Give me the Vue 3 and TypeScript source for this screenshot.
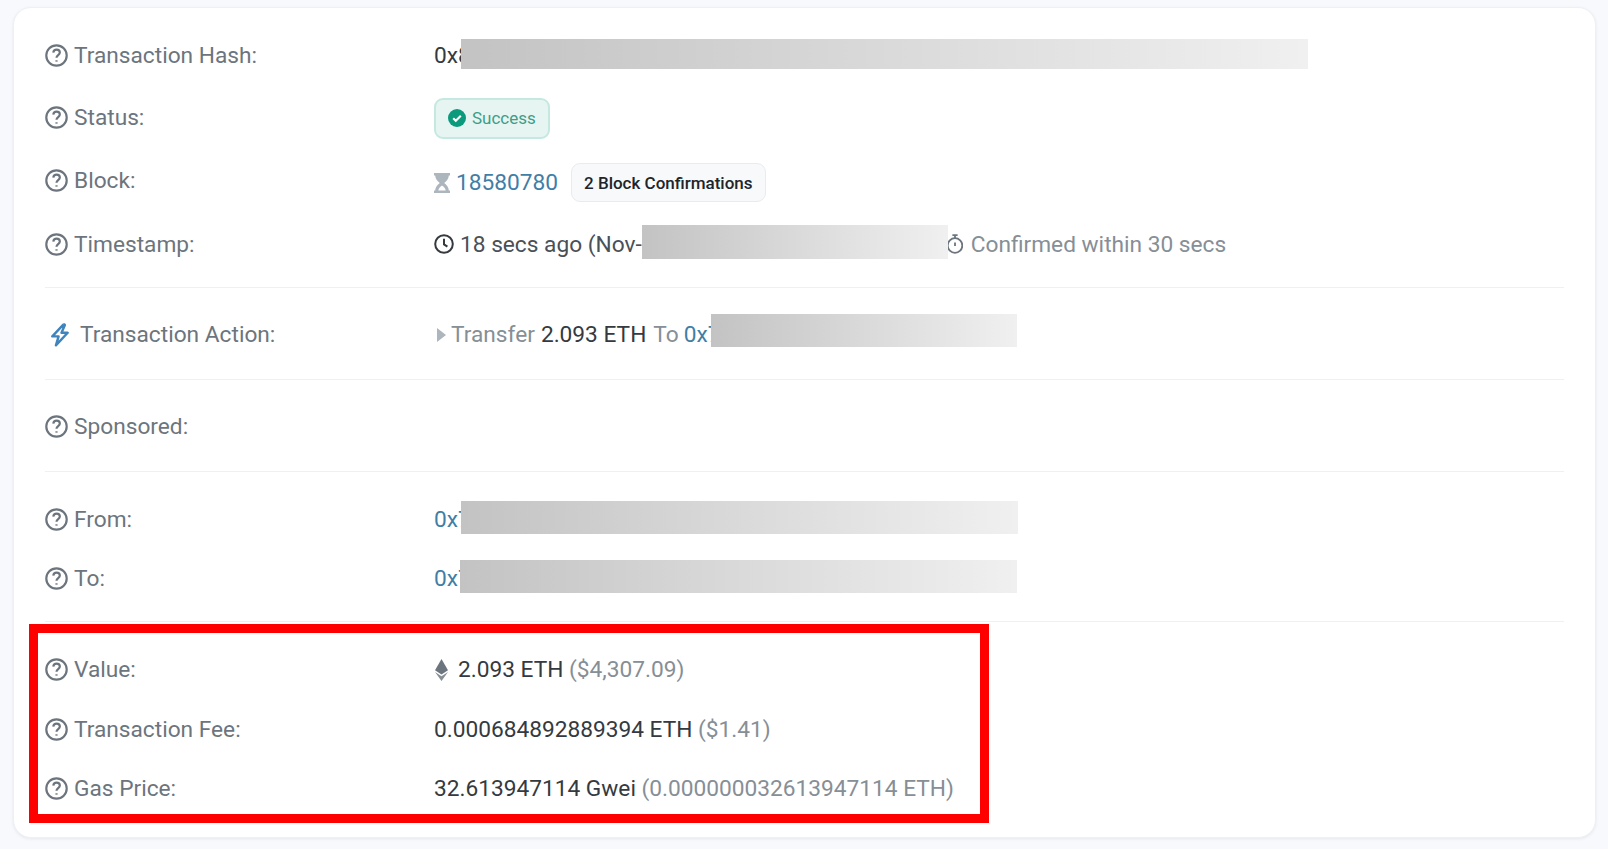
<script setup lang="ts">
const help = 'M12 2.2a9.8 9.8 0 1 0 0 19.6 9.8 9.8 0 0 0 0-19.6Z'
const helpMark = 'M8.9 9.3c.2-1.8 1.5-2.9 3.2-2.9 1.8 0 3.1 1.1 3.1 2.7 0 2.4-3.2 2.6-3.2 5'
</script>

<template>
  <div class="page">
    <div class="card">
      <section class="group first">
        <div class="row">
          <div class="label">
            <svg class="help" viewBox="0 0 24 24"><path :d="help" /><path :d="helpMark" /><path class="dot" d="M12 16.6v1.3" /></svg>
            <span>Transaction Hash:</span>
          </div>
          <div class="value">0x8<span class="redact hash"></span></div>
        </div>
        <div class="row">
          <div class="label">
            <svg class="help" viewBox="0 0 24 24"><path :d="help" /><path :d="helpMark" /><path class="dot" d="M12 16.6v1.3" /></svg>
            <span>Status:</span>
          </div>
          <div class="value">
            <span class="success">
              <svg viewBox="0 0 18 18" width="18" height="18"><circle cx="9" cy="9" r="9" fill="#0b9a7c" /><path d="M5.2 9.2l2.6 2.6 5-5" fill="none" stroke="#fff" stroke-width="2.1" /></svg>
              <span>Success</span>
            </span>
          </div>
        </div>
        <div class="row tall">
          <div class="label">
            <svg class="help" viewBox="0 0 24 24"><path :d="help" /><path :d="helpMark" /><path class="dot" d="M12 16.6v1.3" /></svg>
            <span>Block:</span>
          </div>
          <div class="value block-value">
            <svg class="hourglass" viewBox="0 0 16 20" width="16" height="20">
              <path d="M0 0h16v2.6h-1.2c0 3.2-2.2 5.6-4.6 7.4 2.4 1.8 4.6 4.2 4.6 7.4H16V20H0v-2.6h1.2c0-3.2 2.2-5.6 4.6-7.4C3.400 8.200 1.200 5.800 1.200 2.600H0Z" fill="#adb5bd" />
              <path d="M8 12.400c-1.900 1.400-3.500 3-3.700 5h7.400c-.2-2-1.800-3.600-3.700-5Z" fill="#fff" />
            </svg>
            <a class="link block-no">18580780</a>
            <span class="confirmations">2 Block Confirmations</span>
          </div>
        </div>
        <div class="row tall">
          <div class="label">
            <svg class="help" viewBox="0 0 24 24"><path :d="help" /><path :d="helpMark" /><path class="dot" d="M12 16.6v1.3" /></svg>
            <span>Timestamp:</span>
          </div>
          <div class="value">
            <svg class="clock" viewBox="0 0 20 20" width="20" height="20"><circle cx="10" cy="10" r="8.800" /><path d="M10 4.800V10.400l3.400 2.300" /></svg>
            <span class="stamp">18 secs ago (Nov-</span><span class="redact time"></span>
            <svg class="watch" viewBox="1 0 15 20" width="15" height="20"><circle cx="8" cy="11.500" r="7.300" /><path d="M5.400 1.200h5.200M8 1.200v3.400M8 8.400v3.600" /></svg>
            <span class="muted confirmed">Confirmed within 30 secs</span>
          </div>
        </div>
      </section>

      <section class="group action">
        <div class="row">
          <div class="label">
            <svg class="bolt" viewBox="0 0 20 24" width="20" height="24"><path d="M13.300 1.600 2.300 13.400h6.300l-2.700 9 11.800-12.600h-6.200l3.300-7.600c.2-.7-.9-1.100-1.500-.6Z" /></svg>
            <span>Transaction Action:</span>
          </div>
          <div class="value">
            <svg class="caret" viewBox="0 0 9 14" width="9" height="14"><path d="M0 0l9 7-9 7Z" fill="#adb5bd" /></svg>
            <span class="muted transfer">Transfer</span>
            <span class="amount">2.093 ETH</span>
            <span class="muted to">To</span>
            <a class="link to-addr">0x7</a><span class="redact action-addr"></span>
          </div>
        </div>
      </section>

      <section class="group sponsored">
        <div class="row">
          <div class="label">
            <svg class="help" viewBox="0 0 24 24"><path :d="help" /><path :d="helpMark" /><path class="dot" d="M12 16.6v1.3" /></svg>
            <span>Sponsored:</span>
          </div>
        </div>
      </section>

      <section class="group parties">
        <div class="row short">
          <div class="label">
            <svg class="help" viewBox="0 0 24 24"><path :d="help" /><path :d="helpMark" /><path class="dot" d="M12 16.6v1.3" /></svg>
            <span>From:</span>
          </div>
          <div class="value"><a class="link">0x7</a><span class="redact addr"></span></div>
        </div>
        <div class="row short">
          <div class="label">
            <svg class="help" viewBox="0 0 24 24"><path :d="help" /><path :d="helpMark" /><path class="dot" d="M12 16.6v1.3" /></svg>
            <span>To:</span>
          </div>
          <div class="value"><a class="link">0x7</a><span class="redact addr to-bar"></span></div>
        </div>
      </section>

      <section class="group amounts">
        <div class="highlight"></div>
        <div class="row short">
          <div class="label">
            <svg class="help" viewBox="0 0 24 24"><path :d="help" /><path :d="helpMark" /><path class="dot" d="M12 16.6v1.3" /></svg>
            <span>Value:</span>
          </div>
          <div class="value">
            <svg class="eth" viewBox="0 0 15 22" width="15" height="22">
              <path d="M7.500 0 14 11.200 7.500 15.500 1 11.200Z" fill="#6c757d" />
              <path d="M7.500 17.300 14 13 7.500 22 1 13Z" fill="#868e96" />
            </svg>
            <span class="eth-amount">2.093 ETH</span>&nbsp;<span class="muted">($4,307.09)</span>
          </div>
        </div>
        <div class="row short">
          <div class="label">
            <svg class="help" viewBox="0 0 24 24"><path :d="help" /><path :d="helpMark" /><path class="dot" d="M12 16.6v1.3" /></svg>
            <span>Transaction Fee:</span>
          </div>
          <div class="value">0.000684892889394 ETH&nbsp;<span class="muted">($1.41)</span></div>
        </div>
        <div class="row short">
          <div class="label">
            <svg class="help" viewBox="0 0 24 24"><path :d="help" /><path :d="helpMark" /><path class="dot" d="M12 16.6v1.3" /></svg>
            <span>Gas Price:</span>
          </div>
          <div class="value">32.613947114 Gwei&nbsp;<span class="muted">(0.000000032613947114 ETH)</span></div>
        </div>
      </section>
    </div>
  </div>
</template>

<style>
body {
  background: #f8f9fc;
}
</style>

<style scoped>
.page {
  height: 849px;
  padding: 7px 12px 11px 13px;
  box-sizing: border-box;
  font-family: Roboto, "Liberation Sans", sans-serif;
  font-size: 22.7px;
  color: #343a40;
  overflow: hidden;
}

.card {
  height: 100%;
  box-sizing: border-box;
  padding: 0 31px;
  background: #fff;
  border: 1px solid #eef0f4;
  border-radius: 18px;
  box-shadow: 0 1px 3px rgba(189, 197, 209, 0.3);
}

.group {
  position: relative;
  border-bottom: 1px solid #eff0f2;
}

.group:last-child {
  border-bottom: none;
}

.first {
  padding: 16px 0 11px;
}

.action,
.sponsored {
  padding: 16.5px 0 14.5px;
}

.parties {
  padding: 17.5px 0 12.5px;
}

.amounts {
  padding: 18px 0 0;
}

.row {
  display: grid;
  grid-template-columns: 389px 1fr;
  align-items: center;
  height: 62px;
}

.row.tall {
  height: 64px;
}

.row.short {
  height: 59.5px;
}

.action .row,
.sponsored .row {
  height: 60px;
}

.label {
  display: flex;
  align-items: center;
  color: #6c757d;
}

.help {
  width: 25px;
  height: 25px;
  margin: 0 5px 0 -1px;
  fill: none;
  stroke: #6c757d;
  stroke-width: 2.1;
}

.value {
  display: flex;
  align-items: center;
  white-space: pre;
}

.block-value {
  padding-top: 5px;
}

.link {
  color: #3f7ea6;
}

.muted {
  color: #868e96;
}

.redact {
  display: block;
  flex: none;
  height: 33px;
  background: linear-gradient(90deg, #c3c3c3, #f0f0f0);
}

.redact.hash {
  width: 847px;
  height: 30px;
  margin: 0 0 2px -10px;
}

.redact.time {
  width: 306px;
  height: 34px;
  margin-bottom: 4px;
}

.redact.action-addr {
  width: 306px;
  margin: 0 0 9px -9px;
}

.redact.addr {
  width: 557px;
  margin: 0 0 3px -10px;
}

.redact.to-bar {
  margin: 0 0 4px -11px;
}

.success {
  display: flex;
  align-items: center;
  gap: 6px;
  height: 41px;
  width: 116px;
  margin-top: 2px;
  padding-left: 12px;
  box-sizing: border-box;
  font-size: 17px;
  color: #3f9d87;
  background: #e6f5f2;
  border: 2px solid #c5e8e0;
  border-radius: 9px;
}

.success svg {
  flex: none;
}

.hourglass {
  margin-right: 6px;
}

.block-no {
  margin-right: 13px;
}

.confirmations {
  display: flex;
  align-items: center;
  height: 39px;
  box-sizing: border-box;
  padding: 0 12px;
  font-size: 17px;
  font-weight: 500;
  color: #212529;
  background: #f8f9fa;
  border: 1.500px solid #e9ecef;
  border-radius: 9px;
}

.clock {
  margin-right: 6px;
  fill: none;
  stroke: #343a40;
  stroke-width: 2;
}

.stamp {
  color: #495057;
}

.watch {
  margin-right: 8px;
  fill: none;
  stroke: #6c757d;
  stroke-width: 1.800;
}

.bolt {
  margin: 0 10px 0 5px;
  fill: none;
  stroke: #3f84bd;
  stroke-width: 2.400;
  stroke-linejoin: round;
}

.caret {
  margin: 0 5px 0 3px;
}

.amount {
  margin: 0 7px 0 6px;
}

.to {
  margin-right: 5px;
}

.eth {
  margin-right: 9px;
}

.highlight {
  position: absolute;
  left: -16px;
  top: 2px;
  width: 960px;
  height: 199px;
  box-sizing: border-box;
  border: 9px solid #ff0000;
  pointer-events: none;
}
</style>
